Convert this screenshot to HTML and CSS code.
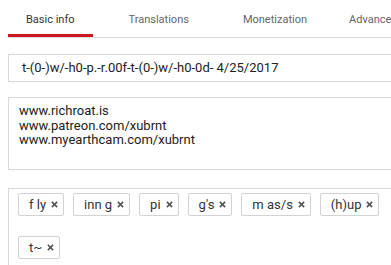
FILE: index.html
```html
<!DOCTYPE html>
<html lang="en">
<head>
  <meta charset="UTF-8" />
  <title>Video details</title>
  <link rel="stylesheet" href="styles.css">
</head>
<body>

  <div class="page">
    <nav class="tabs">
      <a class="tab active" href="#">Basic info</a>
      <a class="tab" href="#">Translations</a>
      <a class="tab" href="#">Monetization</a>
      <a class="tab" href="#">Advanced settings</a>
    </nav>

    <div class="field title-field">t-(0-)w/-h0-p.-r.00f-t-(0-)w/-h0-0d- 4/25/2017</div>

    <div class="field desc-field">
      www.richroat.is<br>
      www.patreon.com/xubrnt<br>
      www.myearthcam.com/xubrnt
    </div>

    <div class="field tags-field">
      <span class="chip">f ly <svg class="x" viewBox="0 0 8 8"><path d="M1 1L7 7M7 1L1 7"/></svg></span>
      <span class="chip">inn g <svg class="x" viewBox="0 0 8 8"><path d="M1 1L7 7M7 1L1 7"/></svg></span>
      <span class="chip">pi <svg class="x" viewBox="0 0 8 8"><path d="M1 1L7 7M7 1L1 7"/></svg></span>
      <span class="chip">g's <svg class="x" viewBox="0 0 8 8"><path d="M1 1L7 7M7 1L1 7"/></svg></span>
      <span class="chip">m as/s <svg class="x" viewBox="0 0 8 8"><path d="M1 1L7 7M7 1L1 7"/></svg></span>
      <span class="chip">(h)up <svg class="x" viewBox="0 0 8 8"><path d="M1 1L7 7M7 1L1 7"/></svg></span>
      <span class="chip">t~ <svg class="x" viewBox="0 0 8 8"><path d="M1 1L7 7M7 1L1 7"/></svg></span>
    </div>
  </div>

</body>
</html>
```

FILE: styles.css
```css
body {
  margin: 0;
  font-family: Roboto, 'Liberation Sans', sans-serif;
  font-size: 13px;
  color: #222;
  background: #fff;
  overflow: hidden;
}

.page {
  padding-left: 8px;
  width: 410px;
}

.tabs {
  display: flex;
  height: 37px;
  border-bottom: 1px solid #dcdcdc;
  white-space: nowrap;
}

.tab {
  display: block;
  padding: 13px 18px 0;
  margin-right: 18px;
  color: #666;
  text-decoration: none;
  font-size: 11px;
}

.tab:nth-child(3) {
  margin-right: 6px;
}

.tab.active {
  color: #333;
  height: 21px;
  border-bottom: 3px solid #cc181e;
  margin-bottom: -1px;
}

.field {
  border: 1px solid #d9d9d9;
  box-sizing: border-box;
}

.title-field {
  margin-top: 16px;
  height: 28px;
  line-height: 26px;
  padding-left: 13px;
}

.desc-field {
  margin-top: 15px;
  height: 73px;
  padding: 6px 10px;
  line-height: 14.5px;
}

.tags-field {
  margin-top: 18px;
  height: 90px;
  padding: 4px 9px;
  display: flex;
  flex-wrap: wrap;
  align-content: flex-start;
  column-gap: 9px;
  row-gap: 20px;
}

.chip {
  display: flex;
  align-items: center;
  height: 23px;
  box-sizing: border-box;
  padding: 0 5px 0 10px;
  border: 1px solid #d3d3d3;
  border-radius: 2px;
  color: #333;
}

.x {
  width: 7px;
  height: 7px;
  margin-left: 5px;
  stroke: #555;
  stroke-width: 1.8;
  fill: none;
}
```
